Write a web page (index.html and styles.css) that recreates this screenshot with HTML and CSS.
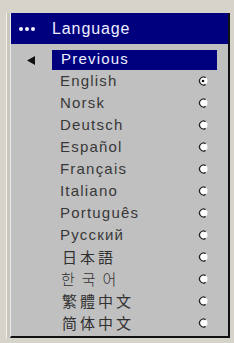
FILE: index.html
```html
<!DOCTYPE html>
<html>
<head>
<meta charset="utf-8">
<link rel="stylesheet" href="styles.css">
</head>
<body>
<div class="frame">
  <div class="panel">
    <div class="header">
      <span class="dots"><i></i><i></i><i></i></span>
      <span class="title">Language</span>
    </div>
    <div class="list">
      <div class="row">
        <span class="arrow"><svg width="8" height="9" viewBox="0 0 8 9"><polygon points="0,4.5 8,0 8,9" fill="#111"/></svg></span>
        <span class="main selected"><span class="label">Previous</span></span>
      </div>
      <div class="row"><span class="arrow"></span><span class="main"><span class="label">English</span><svg class="radio" width="10" height="10" viewBox="0 0 10 10"><circle cx="5" cy="5" r="4.5" fill="#fff"/><path d="M7.6 1.6 A4 4 0 1 0 7.6 8.4" fill="none" stroke="#222" stroke-width="1.4"/><circle cx="5" cy="5" r="1.3" fill="#111"/></svg></span></div>
      <div class="row"><span class="arrow"></span><span class="main"><span class="label">Norsk</span><svg class="radio" width="10" height="10" viewBox="0 0 10 10"><circle cx="5" cy="5" r="4.5" fill="#fff"/><path d="M7.6 1.6 A4 4 0 1 0 7.6 8.4" fill="none" stroke="#222" stroke-width="1.4"/></svg></span></div>
      <div class="row"><span class="arrow"></span><span class="main"><span class="label">Deutsch</span><svg class="radio" width="10" height="10" viewBox="0 0 10 10"><circle cx="5" cy="5" r="4.5" fill="#fff"/><path d="M7.6 1.6 A4 4 0 1 0 7.6 8.4" fill="none" stroke="#222" stroke-width="1.4"/></svg></span></div>
      <div class="row"><span class="arrow"></span><span class="main"><span class="label">Español</span><svg class="radio" width="10" height="10" viewBox="0 0 10 10"><circle cx="5" cy="5" r="4.5" fill="#fff"/><path d="M7.6 1.6 A4 4 0 1 0 7.6 8.4" fill="none" stroke="#222" stroke-width="1.4"/></svg></span></div>
      <div class="row"><span class="arrow"></span><span class="main"><span class="label">Français</span><svg class="radio" width="10" height="10" viewBox="0 0 10 10"><circle cx="5" cy="5" r="4.5" fill="#fff"/><path d="M7.6 1.6 A4 4 0 1 0 7.6 8.4" fill="none" stroke="#222" stroke-width="1.4"/></svg></span></div>
      <div class="row"><span class="arrow"></span><span class="main"><span class="label">Italiano</span><svg class="radio" width="10" height="10" viewBox="0 0 10 10"><circle cx="5" cy="5" r="4.5" fill="#fff"/><path d="M7.6 1.6 A4 4 0 1 0 7.6 8.4" fill="none" stroke="#222" stroke-width="1.4"/></svg></span></div>
      <div class="row"><span class="arrow"></span><span class="main"><span class="label">Português</span><svg class="radio" width="10" height="10" viewBox="0 0 10 10"><circle cx="5" cy="5" r="4.5" fill="#fff"/><path d="M7.6 1.6 A4 4 0 1 0 7.6 8.4" fill="none" stroke="#222" stroke-width="1.4"/></svg></span></div>
      <div class="row"><span class="arrow"></span><span class="main"><span class="label">Русский</span><svg class="radio" width="10" height="10" viewBox="0 0 10 10"><circle cx="5" cy="5" r="4.5" fill="#fff"/><path d="M7.6 1.6 A4 4 0 1 0 7.6 8.4" fill="none" stroke="#222" stroke-width="1.4"/></svg></span></div>
      <div class="row"><span class="arrow"></span><span class="main"><span class="label cjk">日本語</span><svg class="radio" width="10" height="10" viewBox="0 0 10 10"><circle cx="5" cy="5" r="4.5" fill="#fff"/><path d="M7.6 1.6 A4 4 0 1 0 7.6 8.4" fill="none" stroke="#222" stroke-width="1.4"/></svg></span></div>
      <div class="row"><span class="arrow"></span><span class="main"><span class="label cjk ko">한국어</span><svg class="radio" width="10" height="10" viewBox="0 0 10 10"><circle cx="5" cy="5" r="4.5" fill="#fff"/><path d="M7.6 1.6 A4 4 0 1 0 7.6 8.4" fill="none" stroke="#222" stroke-width="1.4"/></svg></span></div>
      <div class="row"><span class="arrow"></span><span class="main"><span class="label cjk tc">繁體中文</span><svg class="radio" width="10" height="10" viewBox="0 0 10 10"><circle cx="5" cy="5" r="4.5" fill="#fff"/><path d="M7.6 1.6 A4 4 0 1 0 7.6 8.4" fill="none" stroke="#222" stroke-width="1.4"/></svg></span></div>
      <div class="row"><span class="arrow"></span><span class="main"><span class="label cjk sc">简体中文</span><svg class="radio" width="10" height="10" viewBox="0 0 10 10"><circle cx="5" cy="5" r="4.5" fill="#fff"/><path d="M7.6 1.6 A4 4 0 1 0 7.6 8.4" fill="none" stroke="#222" stroke-width="1.4"/></svg></span></div>
    </div>
  </div>
</div>
</body>
</html>
```
FILE: styles.css
```css
html, body {
  margin: 0;
  padding: 0;
  background: #d6d3cb;
  width: 234px;
  height: 343px;
  overflow: hidden;
}
.frame {
  padding: 13px 0 0 7px;
}
.panel {
  width: 217px;
  margin-left: 3px;
  background: #c0c0c0;
  border-right: 2px solid #111;
  border-bottom: 2px solid #111;
  border-left: 1px solid #e8e8e8;
  box-shadow: -3px 0 0 0 #c8c6bf, -4px 0 0 0 #f2f1ec;
  padding-bottom: 2px;
  font-family: "Liberation Sans", Arial, sans-serif;
}
.header {
  height: 31px;
  background: #00007f;
  display: flex;
  align-items: center;
}
.dots {
  display: flex;
  gap: 2px;
  width: 41px;
  padding-left: 8px;
  box-sizing: border-box;
}
.dots i {
  display: block;
  width: 4px;
  height: 4px;
  border-radius: 50%;
  background: #f4f4ff;
}
.title {
  color: #eef0ff;
  font-size: 16px;
  letter-spacing: 0.9px;
  padding-top: 1px;
}
.list {
  padding-top: 4px;
}
.row {
  display: flex;
  height: 22px;
  align-items: stretch;
}
.arrow {
  width: 41px;
  display: flex;
  align-items: center;
  padding-left: 16px;
  box-sizing: border-box;
  padding-top: 2px;
}
.main {
  width: 165px;
  display: flex;
  align-items: center;
  justify-content: space-between;
  padding: 0 9px 0 8px;
  box-sizing: border-box;
}
.main.selected {
  background: #00007f;
  margin-top: 2px;
  padding-left: 9px;
}
.main.selected .label {
  color: #eef0ff;
  margin-top: -2px;
}
.label {
  color: #383838;
  font-size: 15px;
  letter-spacing: 1.2px;
  line-height: 22px;
}
.label.cjk {
  font-family: "Noto Sans CJK JP", sans-serif;
  font-size: 15px;
  letter-spacing: 3px;
  padding-left: 2px;
  color: #303030;
}
.label.ko {
  font-family: "Noto Sans CJK KR", sans-serif;
  letter-spacing: 7px;
  font-weight: 300;
  padding-left: 1px;
}
.label.tc {
  font-family: "Noto Sans CJK TC", sans-serif;
}
.label.sc {
  font-family: "Noto Sans CJK SC", sans-serif;
}
.radio {
  display: block;
  flex: none;
}
```
